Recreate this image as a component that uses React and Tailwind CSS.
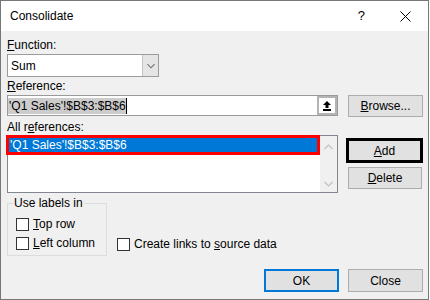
import React from "react";

function Btn({ children, className = "" }) {
  return (
    <div
      className={
        "flex items-center justify-center bg-[#e1e1e1] text-[12px] leading-[16px] text-black " +
        className
      }
    >
      {children}
    </div>
  );
}

function Check({ children, className = "" }) {
  return (
    <div className={"flex h-[16px] items-center " + className}>
      <div className="h-[13px] w-[13px] shrink-0 border border-[#333333] bg-white" />
      <span className="ml-[4px] whitespace-nowrap text-[12px] leading-[16px]">{children}</span>
    </div>
  );
}

function Chevron({ up, color, w = 9 }) {
  return (
    <svg width={w} height="6" viewBox="0 0 9 6">
      <path
        d={up ? "M0.5 5 L4.5 1 L8.5 5" : "M0.5 1 L4.5 5 L8.5 1"}
        fill="none"
        stroke={color}
        strokeWidth="1.2"
      />
    </svg>
  );
}

export default function App() {
  return (
    <div className="h-[300px] w-[430px] bg-white font-['Liberation_Sans',Arial,sans-serif] text-black">
      <div className="flex h-[300px] w-[429px] flex-col border border-[#777777]">
        {/* Title bar */}
        <div className="flex h-[30px] shrink-0 items-center bg-white pl-[9px] pr-[17px]">
          <span className="text-[12px] leading-[16px]">Consolidate</span>
          <div className="flex-1" />
          <span className="text-[13px] leading-[16px]">?</span>
          <svg className="ml-[35px]" width="11" height="11" viewBox="0 0 11 11">
            <path d="M0.5 0.5 L10.5 10.5 M10.5 0.5 L0.5 10.5" stroke="#000" strokeWidth="1" />
          </svg>
        </div>

        {/* Body */}
        <div className="flex flex-1 flex-col bg-[#f0f0f0] pl-[6px] pr-[5px] text-[12px] leading-[16px]">
          <div className="mt-[6px] h-[16px]">
            <u>F</u>unction:
          </div>
          <div className="mt-[1px] flex h-[23px] w-[152px] border border-[#9c9c9c] bg-white">
            <div className="flex flex-1 items-center pl-[3px]">Sum</div>
            <div className="flex w-[16px] items-center justify-center border-l border-[#c4c4c4] bg-[#e5e5e5]">
              <Chevron up={false} color="#707070" w={8} />
            </div>
          </div>

          <div className="mt-[1px] h-[16px]">
            <u>R</u>eference:
          </div>
          <div className="mt-[1px] flex h-[22px] items-start">
            <div className="flex h-[21px] w-[331px] border border-[#9a9a9a] bg-white">
              <div className="flex flex-1 items-center">
                <span className="h-[16px] bg-[#cccccc] pl-[1px] leading-[16px]">'Q1 Sales'!$B$3:$B$6</span>
                <span className="h-[16px] w-[1px] bg-black" />
              </div>
              <div className="flex w-[20px] items-center justify-center border-2 border-[#b4b4b4] bg-white">
                <svg width="8" height="10" viewBox="0 0 8 10">
                  <path d="M4 0 L8 4 L0 4 Z" fill="#000" />
                  <rect x="2.5" y="4" width="3" height="3" fill="#000" />
                  <rect x="0" y="8" width="8" height="2" fill="#000" />
                </svg>
              </div>
            </div>
            <Btn className="ml-[10px] h-[22px] w-[75px] border border-[#adadad]">
              <span>
                <u>B</u>rowse...
              </span>
            </Btn>
          </div>

          <div className="mt-[2px] h-[16px]">
            All r<u>e</u>ferences:
          </div>
          <div className="flex h-[58px] items-start">
            <div className="flex h-[58px] w-[332px] border border-[#828790] bg-white">
              <div className="flex-1">
                <div className="-ml-[2px] -mt-[1px] flex h-[20px] w-[314px] items-center border-[3px] border-[#ff0000] bg-[#0078d7] pl-[1px] leading-[14px] text-white">
                  'Q1 Sales'!$B$3:$B$6
                </div>
              </div>
              <div className="flex w-[17px] flex-col justify-between bg-[#f0f0f0]">
                <div className="flex h-[17px] items-center justify-center pt-[4px]">
                  <Chevron up color="#c0c0c0" />
                </div>
                <div className="flex h-[17px] items-center justify-center">
                  <Chevron up={false} color="#c0c0c0" />
                </div>
              </div>
            </div>
            <div className="ml-[8px] flex flex-col">
              <Btn className="mt-[3px] h-[25px] w-[77px] border-[3px] border-black">
                <span>
                  <u>A</u>dd
                </span>
              </Btn>
              <Btn className="ml-[2px] mt-[4px] h-[22px] w-[74px] border border-[#adadad]">
                <span>
                  <u>D</u>elete
                </span>
              </Btn>
            </div>
          </div>

          <div className="mt-[2px] flex items-end">
            <fieldset className="h-[61px] w-[100px] border border-[#dcdcdc] pb-[3px] pl-[8px] pt-[5px]">
              <legend className="-ml-[3px] px-[1px] text-[12px] leading-[16px]">Use labels in</legend>
              <Check>
                <u>T</u>op row
              </Check>
              <Check className="mt-[3px]">
                <u>L</u>eft column
              </Check>
            </fieldset>
            <Check className="mb-[4px] ml-[10px]">
              Create links to <u>s</u>ource data
            </Check>
          </div>

          <div className="mt-[13px] flex justify-end">
            <Btn className="h-[23px] w-[75px] border-2 border-[#0078d7]">OK</Btn>
            <Btn className="ml-[9px] h-[23px] w-[75px] border border-[#adadad]">Close</Btn>
          </div>
        </div>
      </div>
    </div>
  );
}
